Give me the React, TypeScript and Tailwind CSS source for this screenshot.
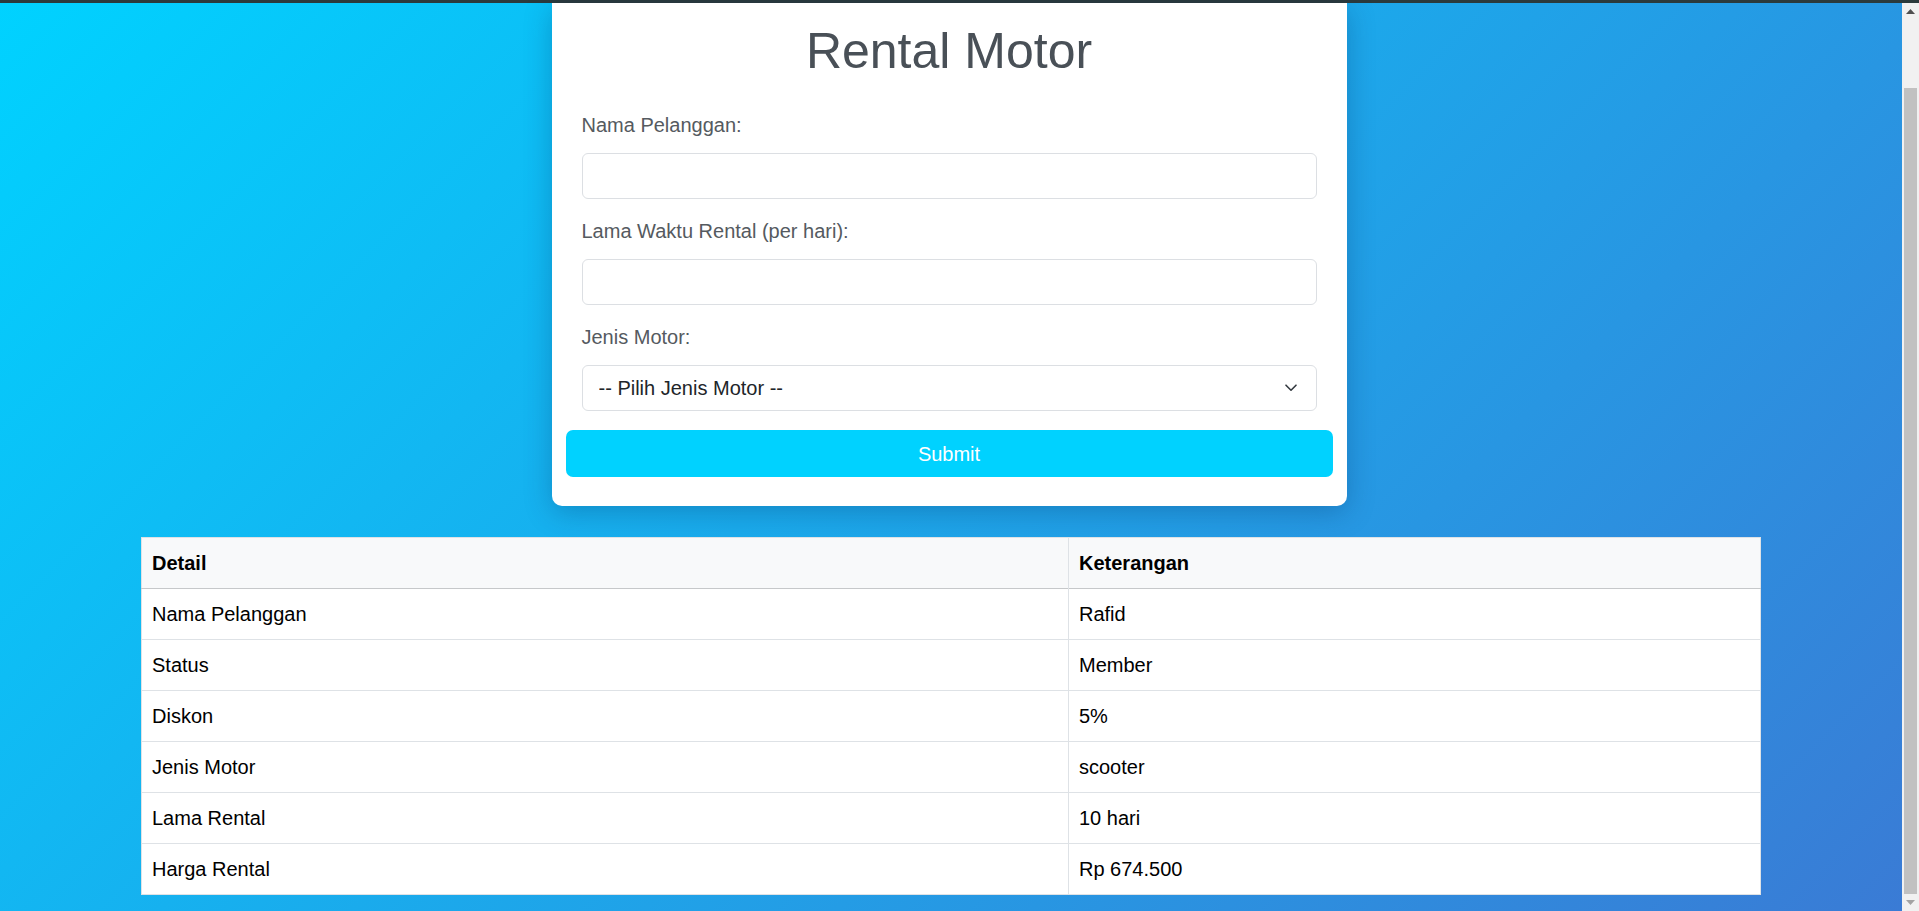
import React from 'react';

const ROWS: [string, string][] = [
  ['Nama Pelanggan', 'Rafid'],
  ['Status', 'Member'],
  ['Diskon', '5%'],
  ['Jenis Motor', 'scooter'],
  ['Lama Rental', '10 hari'],
  ['Harga Rental', 'Rp 674.500'],
];

const Field: React.FC<{ label: string; children: React.ReactNode }> = ({ label, children }) => (
  <div className="px-4 flex flex-col">
    <label className="text-[20px] leading-[23px] text-[#555a60] mb-[16px]">{label}</label>
    {children}
  </div>
);

const Scrollbar: React.FC = () => (
  <div className="w-[17px] h-full bg-[#f1f1f1] flex flex-col items-center">
    <div className="h-[17px] w-full flex items-center justify-center">
      <svg width="9" height="5" viewBox="0 0 9 5"><path d="M0 5 L4.5 0 L9 5 Z" fill="#505050" /></svg>
    </div>
    <div className="h-[68px]" />
    <div className="w-[13px] flex-1 bg-[#c1c1c1]" />
    <div className="h-[17px] w-full flex items-center justify-center">
      <svg width="9" height="5" viewBox="0 0 9 5"><path d="M0 0 L4.5 5 L9 0 Z" fill="#a3a3a3" /></svg>
    </div>
  </div>
);

export default function App() {
  return (
    <div className="h-[911px] w-full flex flex-col overflow-hidden font-['Liberation_Sans',Arial,sans-serif]">
      <div className="h-[3px] w-full bg-[#2b3a3c]" />
      <div className="flex flex-1 min-h-0">
        <main className="flex-1 flex flex-col items-center bg-[linear-gradient(135deg,#00d2ff,#3a7bd5)]">
          <div className="w-[795px] mr-[4px] bg-white rounded-b-[10px] px-[14px] pt-[19px] pb-[29px] shadow-[0_6px_28px_rgba(0,40,90,0.28)]">
            <h1 className="text-center text-[50px] leading-[58px] text-[#495057] mb-[34px]">Rental Motor</h1>
            <div className="flex flex-col gap-[21px]">
              <Field label="Nama Pelanggan:">
                <input className="h-[46px] w-full rounded-[6px] border border-[#dcdfe3] outline-none px-4 text-[20px]" />
              </Field>
              <Field label="Lama Waktu Rental (per hari):">
                <input className="h-[46px] w-full rounded-[6px] border border-[#dcdfe3] outline-none px-4 text-[20px]" />
              </Field>
              <Field label="Jenis Motor:">
                <div className="relative">
                  <select className="appearance-none h-[46px] w-full rounded-[6px] border border-[#dcdfe3] bg-white outline-none pl-4 text-[20px] text-[#212529] font-['Liberation_Sans',Arial,sans-serif]">
                    <option>-- Pilih Jenis Motor --</option>
                    <option>scooter</option>
                    <option>sport</option>
                    <option>bebek</option>
                  </select>
                  <svg className="absolute right-[20px] top-[19px] pointer-events-none" width="12" height="8" viewBox="0 0 12 8">
                    <path d="M1 1.2 L6 6.2 L11 1.2" fill="none" stroke="#343a40" strokeWidth="1.6" strokeLinecap="round" strokeLinejoin="round" />
                  </svg>
                </div>
              </Field>
            </div>
            <button className="mt-[19px] w-full h-[47px] rounded-[7px] bg-[#00d2ff] text-white text-[20px]">Submit</button>
          </div>

          <table className="mt-[31px] w-[1620px] bg-white border border-[#dee2e6] border-collapse text-[20px] text-black">
            <thead>
              <tr className="bg-[#f8f9fa] border-b border-[#c6c8ca]">
                <th className="w-[927px] text-left font-bold px-[10px] h-[51px] border-r border-[#dee2e6]">Detail</th>
                <th className="text-left font-bold px-[10px] h-[51px]">Keterangan</th>
              </tr>
            </thead>
            <tbody>
              {ROWS.map(([k, v]) => (
                <tr key={k} className="border-b border-[#dee2e6]">
                  <td className="px-[10px] h-[51px] border-r border-[#dee2e6]">{k}</td>
                  <td className="px-[10px] h-[51px]">{v}</td>
                </tr>
              ))}
            </tbody>
          </table>
        </main>
        <Scrollbar />
      </div>
    </div>
  );
}
